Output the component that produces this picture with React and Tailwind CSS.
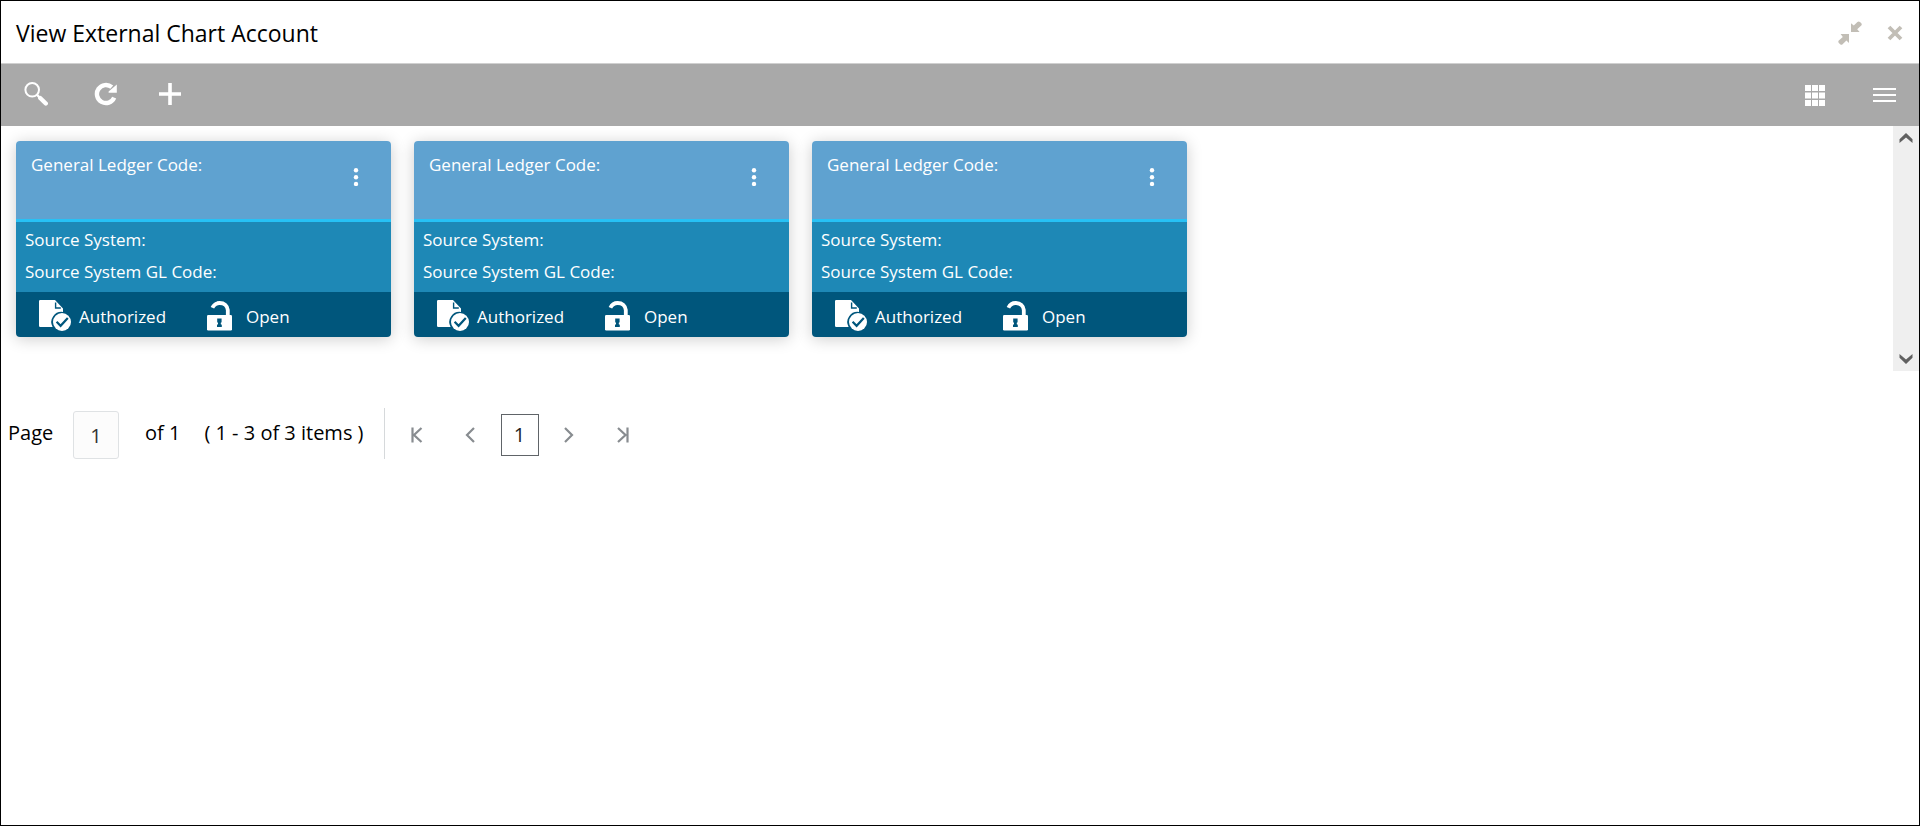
const accounts = [{ id: 1 }, { id: 2 }, { id: 3 }]

export default function App() {
  return (
    <main className="min-h-screen flex flex-col bg-white border border-black text-black font-['Open_Sans','Noto_Sans',sans-serif]">
      <TitleBar />
      <Toolbar />

      <section className="flex">
        <div className="flex-1 min-w-0 flex flex-wrap gap-[23px] pt-[15px] pb-[34px] pl-[15px] pr-4">
          {accounts.map((account) => (
            <AccountCard key={account.id} />
          ))}
        </div>
        <ScrollTrack />
      </section>

      <Pagination />
    </main>
  )
}

function TitleBar() {
  return (
    <header className="flex items-center h-[63px] pt-0.5 pl-[15px] pr-4 border-b border-[#d0d0d0]">
      <h1 className="text-[23px] leading-8">View External Chart Account</h1>
      <div className="ml-auto flex items-center gap-[25px]">
        <button type="button" aria-label="Minimize">
          <svg width="24" height="24" viewBox="0 0 24 24" fill="#c2beb6">
            <path d="M13 2.2 L15.8 4.6 L19.4 1 Q20.6 0 22 1 L23.3 2.2 Q24.2 3.4 23.3 4.6 L19.2 8.3 L21.6 11 H13 Z" />
            <path d="M11 22 L8.4 19.6 L4.6 23.2 Q3.4 24.2 2.2 23.2 L0.8 22 Q-0.2 20.8 0.8 19.6 L4.8 15.9 L2.6 13 H11 Z" />
          </svg>
        </button>
        <button type="button" aria-label="Close">
          <svg width="16" height="16" viewBox="0 0 16 16" stroke="#c2beb6" strokeWidth="3.8">
            <path d="M2 2 L14 14 M14 2 L2 14" />
          </svg>
        </button>
      </div>
    </header>
  )
}

function Toolbar() {
  return (
    <div className="flex items-center h-[62px] pl-[23px] pr-[23px] bg-[#a9a9a9]">
      <div className="flex items-center gap-[46px] pb-0.5">
        <button type="button" aria-label="Search">
          <svg width="24" height="24" viewBox="0 0 24 24" fill="none" stroke="#fff">
            <circle cx="8.2" cy="7.8" r="6.8" strokeWidth="2" />
            <path d="M13 12.8 L16 16" strokeWidth="2.4" />
            <path d="M16.2 16 L21.8 21.6" strokeWidth="4.2" strokeLinecap="round" />
          </svg>
        </button>
        <button type="button" aria-label="Refresh">
          <svg width="24" height="24" viewBox="0 0 24 24">
            <path d="M20.2 15.6 A9 9 0 1 1 17.8 5.2" fill="none" stroke="#fff" strokeWidth="4.4" />
            <path d="M22.8 2.4 V10.8 H14.6 V9.6 Z" fill="#fff" />
          </svg>
        </button>
        <button type="button" aria-label="Add" className="-ml-[5px]">
          <svg width="22" height="22" viewBox="0 0 22 22" fill="#fff">
            <path d="M9.2 0 H12.8 V9.2 H22 V12.8 H12.8 V22 H9.2 V12.8 H0 V9.2 H9.2 Z" />
          </svg>
        </button>
      </div>
      <div className="ml-auto flex items-center gap-12">
        <button type="button" aria-label="Tile view">
          <svg width="20" height="21" viewBox="0 0 20 21" fill="#fff">
            {[0, 7, 14].map((x) =>
              [0, 7.5, 15].map((y) => <rect key={`${x}-${y}`} x={x} y={y} width="6" height="6" />)
            )}
          </svg>
        </button>
        <button type="button" aria-label="List view">
          <svg width="23" height="14" viewBox="0 0 23 14" fill="#fff">
            <path d="M0 0 H23 V2 H0 Z M0 6 H23 V8 H0 Z M0 12 H23 V14 H0 Z" />
          </svg>
        </button>
      </div>
    </div>
  )
}

function AccountCard() {
  return (
    <article className="w-[375px] rounded-[4px] overflow-hidden text-white text-[17px] shadow-[0_2px_16px_rgba(0,0,0,0.2)]">
      <div className="flex items-start h-[81px] pt-3 pl-[15px] pr-7 bg-[#5fa2d0] border-b-[3px] border-[#27c1f5]">
        <span className="leading-6">General Ledger Code:</span>
        <button type="button" aria-label="More actions" className="ml-auto mt-[15px] px-1">
          <svg width="6" height="18" viewBox="0 0 6 18" fill="#fff">
            <circle cx="3" cy="2.2" r="2.2" />
            <circle cx="3" cy="9.2" r="2.2" />
            <circle cx="3" cy="16" r="2.2" />
          </svg>
        </button>
      </div>
      <div className="h-[70px] pt-0.5 pl-[9px] bg-[#1e88b6] leading-8">
        <p>Source System:</p>
        <p>Source System GL Code:</p>
      </div>
      <div className="flex items-center h-[45px] pt-0.5 pl-[23px] bg-[#00567c]">
        <AuthorizedIcon />
        <span className="w-[136px] pl-2 pt-0.5">Authorized</span>
        <OpenLockIcon />
        <span className="pl-[14px] pt-0.5">Open</span>
      </div>
    </article>
  )
}

function AuthorizedIcon() {
  return (
    <svg width="32" height="31" viewBox="0 0 32 31" fill="none">
      <path d="M1.2 0 H16 L24 8.5 V12 A10.2 10.2 0 0 0 13.6 27 H1.2 Q0 27 0 25.8 V1.2 Q0 0 1.2 0 Z" fill="#fff" />
      <path d="M16.6 2.6 V8 H21.8" stroke="#00567c" strokeWidth="1.4" />
      <circle cx="23" cy="22" r="9" fill="#fff" />
      <path d="M17.6 21.8 L21.6 25.8 L28.8 18" stroke="#00567c" strokeWidth="2.2" />
    </svg>
  )
}

function OpenLockIcon() {
  return (
    <svg width="25" height="30" viewBox="0 0 25 30" fill="none">
      <path d="M5.4 6.8 C7 3.4 9.6 2 12.6 2 C17.4 2 20.4 5 20.8 9 V14" stroke="#fff" strokeWidth="3.8" />
      <rect y="14" width="25" height="15.5" rx="1.2" fill="#fff" />
      <path d="M10.2 17.6 H14.6 V21.2 L13.8 21.8 V23.2 L14.8 23.8 V26 H10 V23.8 L11 23.2 V21.8 L10.2 21.2 Z" fill="#00567c" />
    </svg>
  )
}

function ScrollTrack() {
  return (
    <div className="flex flex-col justify-between items-center w-[26px] py-[7px] bg-[#efefef]">
      <button type="button" aria-label="Scroll up">
        <svg width="14" height="10" viewBox="0 0 14 10" fill="#606060">
          <path d="M7 0 L13.5 6.2 V10 L7 4.4 L0.5 10 V6.2 Z" />
        </svg>
      </button>
      <button type="button" aria-label="Scroll down">
        <svg width="14" height="10" viewBox="0 0 14 10" fill="#606060">
          <path d="M7 10 L13.5 3.8 V0 L7 5.6 L0.5 0 V3.8 Z" />
        </svg>
      </button>
    </div>
  )
}

function Pagination() {
  return (
    <nav aria-label="Pagination" className="flex items-center mt-9 pl-[7px] text-[20px]">
      <label htmlFor="page" className="w-[65px]">Page</label>
      <input
        id="page"
        type="text"
        defaultValue="1"
        className="w-[46px] h-12 mt-1 rounded-[3px] border border-[#dfe2e4] bg-[#fcfcfc] text-center text-[#333]"
      />
      <span className="ml-[26px]">of 1</span>
      <span className="ml-6">( 1 - 3 of 3 items )</span>
      <div className="h-[51px] ml-5 border-l border-[#d6d9db]" />
      <div className="flex items-center pt-[3px] ml-6 text-[#888c90]">
        <PageButton label="First page" d="M3.5 0.5 V15.5 M12.5 1 L5 8 L12.5 15" />
        <PageButton label="Previous page" d="M11 1 L4 8 L11 15" className="ml-[38px]" />
        <button type="button" aria-current="page" className="w-[38px] h-[42px] ml-[22px] border border-[#606468] text-[#222]">
          1
        </button>
        <PageButton label="Next page" d="M4 1 L11 8 L4 15" className="ml-[22px]" />
        <PageButton label="Last page" d="M3 1 L10.5 8 L3 15 M12.5 0.5 V15.5" className="ml-[38px]" />
      </div>
    </nav>
  )
}

function PageButton({ label, d, className = '' }) {
  return (
    <button type="button" aria-label={label} className={className}>
      <svg width="16" height="16" viewBox="0 0 16 16" fill="none" stroke="currentColor" strokeWidth="2.2">
        <path d={d} />
      </svg>
    </button>
  )
}
